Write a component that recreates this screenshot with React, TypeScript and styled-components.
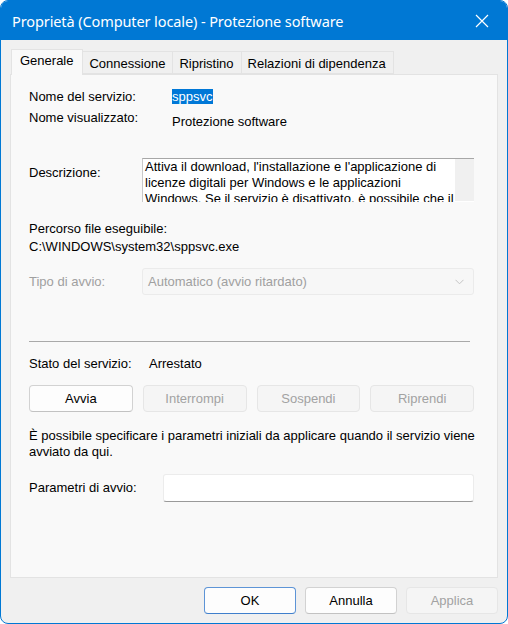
import styled, { createGlobalStyle } from "styled-components";

const ACCENT = "#0078d4";
const FONT = `"Liberation Sans", Arial, sans-serif`;

const GlobalStyle = createGlobalStyle`
  html, body {
    margin: 0;
    padding: 0;
    background: #ffffff;
  }
  * {
    box-sizing: border-box;
  }
`;

const TABS = ["Generale", "Connessione", "Ripristino", "Relazioni di dipendenza"];
const SERVICE_BUTTONS = [
  { label: "Avvia", disabled: false },
  { label: "Interrompi", disabled: true },
  { label: "Sospendi", disabled: true },
  { label: "Riprendi", disabled: true },
];

const App = () => {
  return (
    <>
      <GlobalStyle />
      <Window>
        <TitleBar>
          <Title>Proprietà (Computer locale) - Protezione software</Title>
          <CloseButton aria-label="Chiudi">
            <svg width="14" height="14" viewBox="0 0 14 14">
              <path d="M1 1 L13 13 M13 1 L1 13" stroke="#ffffff" strokeWidth="1.2" fill="none" />
            </svg>
          </CloseButton>
        </TitleBar>

        <Body>
          <TabList>
            {TABS.map((tab, i) => (
              <Tab key={tab} $active={i === 0}>
                {tab}
              </Tab>
            ))}
          </TabList>

          <Panel>
            <Row $top={14} $labelWidth={143}>
              <Label>Nome del servizio:</Label>
              <Value>
                <Selected>sppsvc</Selected>
              </Value>
            </Row>
            <Row $top={5} $labelWidth={143} $align="flex-start">
              <Label>Nome visualizzato:</Label>
              <Value $offset={4}>Protezione software</Value>
            </Row>

            <Row $top={28} $labelWidth={113} $align="flex-start">
              <Label $offset={7}>Descrizione:</Label>
              <DescriptionBox>
                <DescriptionText>
                  Attiva il download, l'installazione e l'applicazione di licenze digitali per
                  Windows e le applicazioni Windows. Se il servizio è disattivato, è possibile che il
                </DescriptionText>
                <ScrollTrack />
              </DescriptionBox>
            </Row>

            <Line $top={19}>Percorso file eseguibile:</Line>
            <Line $top={2}>C:\WINDOWS\system32\sppsvc.exe</Line>

            <Row $top={13} $labelWidth={113}>
              <Label $disabled>Tipo di avvio:</Label>
              <Combo>
                <span>Automatico (avvio ritardato)</span>
                <svg width="9" height="6" viewBox="0 0 9 6">
                  <path d="M0.5 0.8 L4.5 4.8 L8.5 0.8" stroke="#c4c4c4" strokeWidth="1" fill="none" />
                </svg>
              </Combo>
            </Row>

            <Separator />

            <Row $top={14} $labelWidth={120}>
              <Label>Stato del servizio:</Label>
              <Value>Arrestato</Value>
            </Row>

            <ButtonGrid>
              {SERVICE_BUTTONS.map((b) => (
                <DialogButton key={b.label} disabled={b.disabled}>
                  {b.label}
                </DialogButton>
              ))}
            </ButtonGrid>

            <Hint>
              È possibile specificare i parametri iniziali da applicare quando il servizio viene
              avviato da qui.
            </Hint>

            <Row $top={14} $labelWidth={134}>
              <Label>Parametri di avvio:</Label>
              <TextInput />
            </Row>
          </Panel>

          <Footer>
            <DialogButton $default>OK</DialogButton>
            <DialogButton>Annulla</DialogButton>
            <DialogButton disabled>Applica</DialogButton>
          </Footer>
        </Body>
      </Window>
    </>
  );
};

export default App;

const Window = styled.div`
  width: 508px;
  height: 624px;
  display: flex;
  flex-direction: column;
  border: 1px solid ${ACCENT};
  border-radius: 8px;
  overflow: hidden;
  background: #f0f0f0;
  font-family: ${FONT};
  font-size: 13px;
  color: #000;
`;

const TitleBar = styled.div`
  height: 39px;
  flex-shrink: 0;
  background: ${ACCENT};
  display: flex;
  align-items: center;
  justify-content: space-between;
  padding: 0 10px 0 11px;
`;

const Title = styled.div`
  color: #ffffff;
  font-family: "Noto Sans", "Open Sans", sans-serif;
  font-size: 14.5px;
  letter-spacing: -0.1px;
`;

const CloseButton = styled.div`
  width: 30px;
  height: 30px;
  display: flex;
  align-items: center;
  justify-content: center;
`;

const Body = styled.div`
  flex: 1;
  display: flex;
  flex-direction: column;
  padding: 9px;
`;

const TabList = styled.div`
  display: flex;
  align-items: flex-end;
  height: 25px;
  padding-left: 1px;
  position: relative;
  z-index: 1;
`;

const Tab = styled.div<{ $active?: boolean }>`
  height: ${(p) => (p.$active ? "26px" : "23px")};
  margin-bottom: ${(p) => (p.$active ? "-1px" : "0")};
  margin-left: ${(p) => (p.$active ? "0" : "-1px")};
  padding: ${(p) => (p.$active ? "2px 9px 0 8px" : "3px 7px 0 6px")};
  background: ${(p) => (p.$active ? "#f9f9f9" : "#f0f0f0")};
  border: 1px solid #e3e3e3;
  border-bottom: ${(p) => (p.$active ? "none" : "1px solid #e3e3e3")};
  line-height: 18px;
  white-space: nowrap;
`;

const Panel = styled.div`
  height: 504px;
  flex-shrink: 0;
  display: flex;
  flex-direction: column;
  background: #f9f9f9;
  border: 1px solid #e3e3e3;
  padding: 0 23px 0 18px;
`;

const Row = styled.div<{ $top: number; $labelWidth: number; $align?: string }>`
  display: grid;
  grid-template-columns: ${(p) => p.$labelWidth}px 1fr;
  align-items: ${(p) => p.$align ?? "center"};
  margin-top: ${(p) => p.$top}px;
  line-height: 16px;
`;

const Label = styled.div<{ $offset?: number; $disabled?: boolean }>`
  padding-top: ${(p) => p.$offset ?? 0}px;
  color: ${(p) => (p.$disabled ? "#a0a0a0" : "#000")};
  white-space: nowrap;
`;

const Value = styled.div<{ $offset?: number }>`
  padding-top: ${(p) => p.$offset ?? 0}px;
  white-space: nowrap;
`;

const Selected = styled.span`
  background: #0078d7;
  color: #ffffff;
  padding: 0 1px 0 0;
  display: inline-block;
  line-height: 15px;
`;

const DescriptionBox = styled.div`
  height: 44px;
  display: flex;
  background: #ffffff;
  border-top: 1px solid #a7a7a7;
  border-left: 1px solid #c9c9c9;
  overflow: hidden;
`;

const DescriptionText = styled.div`
  flex: 1;
  padding: 0 0 0 2px;
  line-height: 16px;
  overflow: hidden;
`;

const ScrollTrack = styled.div`
  width: 19px;
  flex-shrink: 0;
  background: #f0f0f0;
  border-bottom: 1px solid #ffffff;
`;

const Line = styled.div<{ $top: number }>`
  margin-top: ${(p) => p.$top}px;
  line-height: 16px;
  white-space: nowrap;
`;

const Combo = styled.div`
  height: 27px;
  display: flex;
  align-items: center;
  justify-content: space-between;
  padding: 0 9px 0 5px;
  background: #f7f7f7;
  border: 1px solid #ebebeb;
  border-radius: 3px;
  color: #a0a0a0;
`;

const Separator = styled.div`
  margin: 46px 4px 0 0;
  height: 1px;
  background: #a9a9a9;
  flex-shrink: 0;
`;

const ButtonGrid = styled.div`
  display: grid;
  grid-template-columns: repeat(4, 1fr);
  gap: 10px;
  margin-top: 13px;
`;

const DialogButton = styled.button<{ $default?: boolean }>`
  height: 27px;
  font-family: ${FONT};
  font-size: 13px;
  color: #000;
  background: #fdfdfd;
  border: 1px solid ${(p) => (p.$default ? "#5d94d6" : "#d2d2d2")};
  border-bottom-color: ${(p) => (p.$default ? "#3f7fcc" : "#c2c2c2")};
  border-radius: 4px;
  padding: 0;

  &:disabled {
    background: #f5f5f5;
    border-color: #e6e6e6;
    color: #a2a2a2;
  }
`;

const Hint = styled.div`
  margin: 16px -10px 0 0;
  line-height: 16px;
`;

const TextInput = styled.div`
  height: 28px;
  background: #ffffff;
  border: 1px solid #ececec;
  border-bottom: 1px solid #9a9a9a;
  border-radius: 3px;
`;

const Footer = styled.div`
  display: grid;
  grid-template-columns: repeat(3, 92px);
  gap: 9px;
  justify-content: flex-end;
  margin-top: 9px;
`;
